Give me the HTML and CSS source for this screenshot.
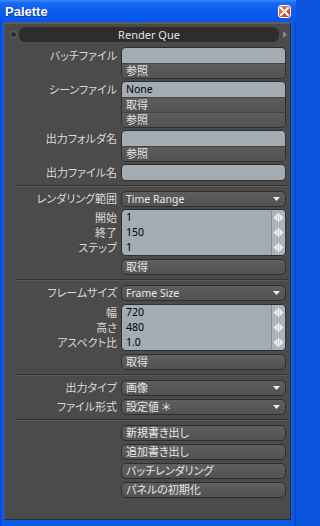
FILE: index.html
```html
<!DOCTYPE html>
<html>
<head>
<meta charset="utf-8">
<link rel="stylesheet" href="styles.css">
</head>
<body>
<div class="window">
  <div class="titlebar">
    <span class="title">Palette</span>
    <span class="close"><svg width="9" height="9" viewBox="0 0 9 9"><path d="M1 1 L8 8 M8 1 L1 8" stroke="#fff" stroke-width="2" stroke-linecap="square"/></svg></span>
  </div>
  <div class="content">
    <div class="header">
      <span class="dot"></span>
      <div class="tabbar">Render Que</div>
      <span class="arrow"><svg width="4" height="7" viewBox="0 0 4 7"><path d="M0 0 L4 3.5 L0 7 Z" fill="#8a8a8a"/></svg></span>
    </div>
    <div class="form">
      <div class="row gap2">
        <div class="label">バッチファイル</div>
        <div class="group"><div class="field"></div><div class="gbtn">参照</div></div>
      </div>
      <div class="row gap2">
        <div class="label">シーンファイル</div>
        <div class="group"><div class="field">None</div><div class="gbtn">取得</div><div class="gbtn">参照</div></div>
      </div>
      <div class="row gap2">
        <div class="label">出力フォルダ名</div>
        <div class="group"><div class="field"></div><div class="gbtn">参照</div></div>
      </div>
      <div class="row">
        <div class="label">出力ファイル名</div>
        <div class="group"><div class="field"></div></div>
      </div>
      <div class="sep"></div>
      <div class="row gap2">
        <div class="label drop-label">レンダリング範囲</div>
        <div class="drop"><span>Time Range</span><svg class="tri" width="7" height="4" viewBox="0 0 7 4"><path d="M0 0 L7 0 L3.5 4 Z" fill="#f0f0f0"/></svg></div>
      </div>
      <div class="row gap3">
        <div class="stack"><div>開始</div><div>終了</div><div>ステップ</div></div>
        <div class="group num">
          <div class="numrow"><span class="val">1</span><span class="spin"><svg width="11" height="9" viewBox="0 0 11 9"><path d="M4.5 0.5 L0.5 4.5 L4.5 8.5 Z M6.5 0.5 L10.5 4.5 L6.5 8.5 Z" fill="#ececec"/><path d="M5.5 0 V9" stroke="#f8f8f8" stroke-width="1"/></svg></span></div>
          <div class="numrow"><span class="val">150</span><span class="spin"><svg width="11" height="9" viewBox="0 0 11 9"><path d="M4.5 0.5 L0.5 4.5 L4.5 8.5 Z M6.5 0.5 L10.5 4.5 L6.5 8.5 Z" fill="#ececec"/><path d="M5.5 0 V9" stroke="#f8f8f8" stroke-width="1"/></svg></span></div>
          <div class="numrow"><span class="val">1</span><span class="spin"><svg width="11" height="9" viewBox="0 0 11 9"><path d="M4.5 0.5 L0.5 4.5 L4.5 8.5 Z M6.5 0.5 L10.5 4.5 L6.5 8.5 Z" fill="#ececec"/><path d="M5.5 0 V9" stroke="#f8f8f8" stroke-width="1"/></svg></span></div>
        </div>
      </div>
      <div class="row">
        <div></div>
        <div class="btn">取得</div>
      </div>
      <div class="sep"></div>
      <div class="row gap3">
        <div class="label drop-label">フレームサイズ</div>
        <div class="drop"><span>Frame Size</span><svg class="tri" width="7" height="4" viewBox="0 0 7 4"><path d="M0 0 L7 0 L3.5 4 Z" fill="#f0f0f0"/></svg></div>
      </div>
      <div class="row gap3">
        <div class="stack"><div>幅</div><div>高さ</div><div>アスペクト比</div></div>
        <div class="group num">
          <div class="numrow"><span class="val">720</span><span class="spin"><svg width="11" height="9" viewBox="0 0 11 9"><path d="M4.5 0.5 L0.5 4.5 L4.5 8.5 Z M6.5 0.5 L10.5 4.5 L6.5 8.5 Z" fill="#ececec"/><path d="M5.5 0 V9" stroke="#f8f8f8" stroke-width="1"/></svg></span></div>
          <div class="numrow"><span class="val">480</span><span class="spin"><svg width="11" height="9" viewBox="0 0 11 9"><path d="M4.5 0.5 L0.5 4.5 L4.5 8.5 Z M6.5 0.5 L10.5 4.5 L6.5 8.5 Z" fill="#ececec"/><path d="M5.5 0 V9" stroke="#f8f8f8" stroke-width="1"/></svg></span></div>
          <div class="numrow"><span class="val">1.0</span><span class="spin"><svg width="11" height="9" viewBox="0 0 11 9"><path d="M4.5 0.5 L0.5 4.5 L4.5 8.5 Z M6.5 0.5 L10.5 4.5 L6.5 8.5 Z" fill="#ececec"/><path d="M5.5 0 V9" stroke="#f8f8f8" stroke-width="1"/></svg></span></div>
        </div>
      </div>
      <div class="row">
        <div></div>
        <div class="btn">取得</div>
      </div>
      <div class="sep"></div>
      <div class="row gap3">
        <div class="label drop-label">出力タイプ</div>
        <div class="drop"><span class="jp">画像</span><svg class="tri" width="7" height="4" viewBox="0 0 7 4"><path d="M0 0 L7 0 L3.5 4 Z" fill="#f0f0f0"/></svg></div>
      </div>
      <div class="row">
        <div class="label drop-label">ファイル形式</div>
        <div class="drop"><span class="jp">設定値 ＊</span><svg class="tri" width="7" height="4" viewBox="0 0 7 4"><path d="M0 0 L7 0 L3.5 4 Z" fill="#f0f0f0"/></svg></div>
      </div>
      <div class="sep"></div>
      <div class="row gap3"><div></div><div class="btn">新規書き出し</div></div>
      <div class="row gap3"><div></div><div class="btn">追加書き出し</div></div>
      <div class="row gap3"><div></div><div class="btn">バッチレンダリング</div></div>
      <div class="row"><div></div><div class="btn">パネルの初期化</div></div>
    </div>
  </div>
</div>
</body>
</html>
```

FILE: styles.css
```css
html, body {
  margin: 0;
  padding: 0;
  background: #0a54e0;
}
body {
  width: 296px;
  height: 526px;
  overflow: hidden;
  font-family: "Noto Sans", "Noto Sans CJK JP", sans-serif;
  font-size: 11px;
  font-feature-settings: "palt";
}
.window {
  width: 296px;
  height: 526px;
  box-sizing: border-box;
  display: flex;
  flex-direction: column;
  background: linear-gradient(to right, #0840c8 0, #0a5ae8 2px, #0a5ae8 calc(100% - 2px), #0638b8 100%);
  padding: 0 5px 6px 4px;
}
.titlebar {
  height: 22px;
  margin: 0 -5px 0 -4px;
  padding: 0 5px 0 5px;
  display: flex;
  align-items: center;
  justify-content: space-between;
  background: linear-gradient(to bottom, #3c8cfc 0, #1668f4 3px, #0a5cf0 11px, #0656ea 100%);
}
.title {
  font-family: "Liberation Sans", Arial, sans-serif;
  font-weight: bold;
  font-size: 13px;
  color: #fff;
  text-shadow: 1px 1px 0 #0a3aa0;
  margin-top: 1px;
}
.close {
  width: 11px;
  height: 11px;
  margin-top: 1px;
  border: 1px solid #fff;
  border-radius: 3px;
  background: linear-gradient(135deg, #f09070 0, #e05a34 45%, #c63c18 100%);
  display: flex;
  align-items: center;
  justify-content: center;
}
.content {
  flex: 1;
  background: #4b4b4b;
  border-top: 2px solid #5e5e5e;
  border-left: 1px solid #585858;
  border-right: 1px solid #2c2c2c;
  border-bottom: 1px solid #2c2c2c;
  display: flex;
  flex-direction: column;
}
.header {
  margin-top: 3px;
  height: 15px;
  padding: 0 3px 0 5px;
  display: flex;
  align-items: center;
}
.dot {
  width: 5px;
  height: 5px;
  border-radius: 50%;
  background: #2a2a2a;
  border: 1px solid #6a6a6a;
  margin-right: 2px;
}
.tabbar {
  flex: 1;
  height: 15px;
  background: #2d2d2d;
  border-radius: 6px;
  color: #e4e4e4;
  font-size: 11px;
  line-height: 15px;
  text-align: center;
  margin-right: 4px;
}
.arrow {
  width: 4px;
  display: flex;
  align-items: center;
}
.form {
  margin-top: 5px;
  padding-right: 4px;
  display: flex;
  flex-direction: column;
}
.row {
  display: grid;
  grid-template-columns: 112px 1fr;
  column-gap: 4px;
  align-items: start;
}
.gap2 { margin-bottom: 2px; }
.gap3 { margin-bottom: 3px; }
.label {
  text-align: right;
  color: #dadada;
  line-height: 17px;
  white-space: nowrap;
}
.drop-label {
  line-height: 16px;
}
.stack {
  padding-top: 1px;
  text-align: right;
  color: #dadada;
  white-space: nowrap;
}
.stack div {
  line-height: 15px;
  height: 15px;
}
.group {
  border: 1px solid #2e2e2e;
  border-radius: 5px;
  overflow: hidden;
  background: #565656;
}
.field {
  height: 15px;
  background: #a3abb3;
  color: #000;
  line-height: 15px;
  padding-left: 4px;
  font-size: 10.5px;
}
.gbtn {
  height: 15px;
  box-sizing: border-box;
  border-top: 1px solid #454545;
  background: linear-gradient(to bottom, #5c5c5c, #535353);
  color: #e6e6e6;
  line-height: 14px;
  padding-left: 4px;
}
.group.num {
  background: #a3abb3;
}
.numrow {
  height: 15px;
  display: flex;
  align-items: center;
}
.val {
  flex: 1;
  color: #000;
  padding-left: 4px;
  font-size: 10.5px;
  line-height: 15px;
}
.spin {
  width: 13px;
  height: 15px;
  border-left: 1px solid #848c93;
  background: #adb4ba;
  display: flex;
  align-items: center;
  justify-content: center;
}
.btn {
  height: 16px;
  box-sizing: border-box;
  border: 1px solid #2e2e2e;
  border-radius: 5px;
  background: linear-gradient(to bottom, #5e5e5e, #525252);
  color: #e8e8e8;
  line-height: 14px;
  padding-left: 4px;
  white-space: nowrap;
}
.drop {
  height: 16px;
  box-sizing: border-box;
  border: 1px solid #2e2e2e;
  border-radius: 5px;
  background: linear-gradient(to bottom, #5e5e5e, #525252);
  color: #e8e8e8;
  line-height: 14px;
  padding: 0 5px 0 4px;
  display: flex;
  align-items: center;
  justify-content: space-between;
  font-size: 10.5px;
}
.drop .jp {
  font-size: 11px;
}
.sep {
  height: 1px;
  margin: 4px -2px 4px 11px;
  background: #333333;
  border-bottom: 1px solid #5a5a5a;
}
```
